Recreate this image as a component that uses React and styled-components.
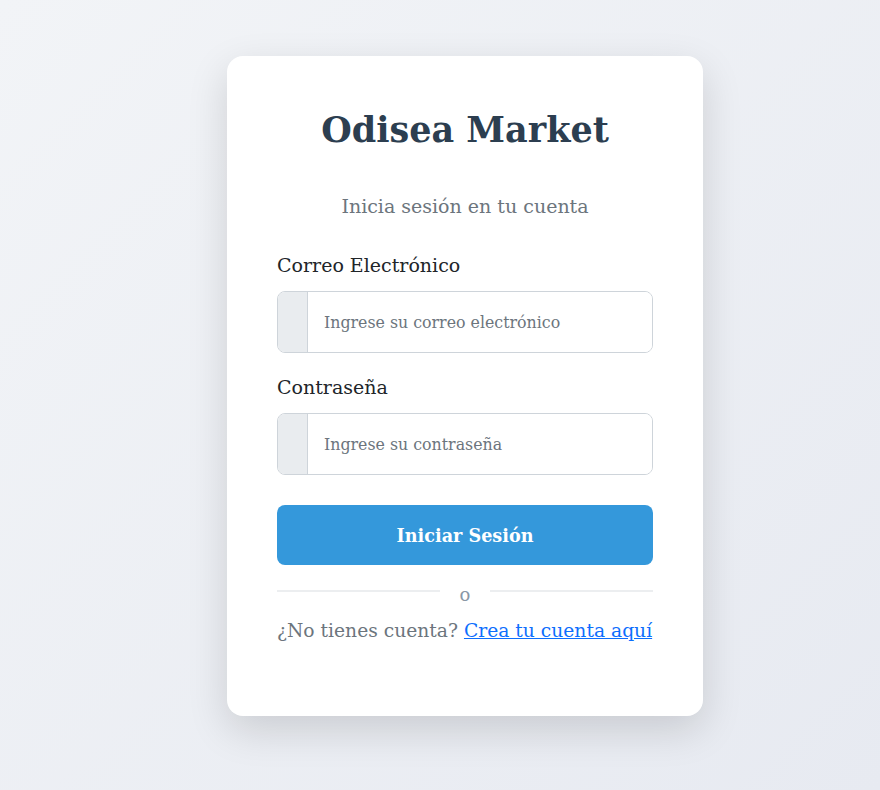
import styled, { createGlobalStyle } from "styled-components";

const GlobalStyle = createGlobalStyle`
  html, body {
    margin: 0;
    padding: 0;
  }
  body {
    min-height: 790px;
    background: linear-gradient(135deg, #f2f4f7 0%, #e7eaf1 100%);
    font-family: "DejaVu Serif", "Liberation Serif", serif;
  }
`;

const Page = styled.div`
  display: flex;
  justify-content: center;
  padding: 56px 0 0 50px;
`;

const Card = styled.div`
  box-sizing: border-box;
  width: 476px;
  height: 660px;
  padding: 46px 50px 0;
  background: #fff;
  border-radius: 16px;
  box-shadow: 0 14px 40px rgba(0, 0, 0, 0.14);
`;

const Title = styled.h1`
  margin: 0;
  text-align: center;
  font-size: 35px;
  font-weight: 700;
  color: #2c3e50;
  line-height: 56px;
`;

const Subtitle = styled.p`
  margin: 33px 0 0;
  text-align: center;
  font-size: 19px;
  color: #6c757d;
  line-height: 30px;
`;

const Field = styled.div`
  margin-top: ${(p) => p.$gap}px;
`;

const Label = styled.label`
  display: block;
  font-size: 19px;
  color: #212529;
  line-height: 28px;
  margin-bottom: 12px;
`;

const InputGroup = styled.div`
  display: flex;
  height: 62px;
  box-sizing: border-box;
  border: 1px solid #ced4da;
  border-radius: 8px;
  overflow: hidden;
`;

const Addon = styled.span`
  width: 29px;
  background: #e9ecef;
  border-right: 1px solid #ced4da;
`;

const Input = styled.input`
  flex: 1;
  border: none;
  outline: none;
  padding: 0 16px;
  font-family: inherit;
  font-size: 15.8px;
  color: #212529;
  background: #fff;
  &::placeholder {
    color: #6c757d;
  }
`;

const Button = styled.button`
  display: block;
  width: 100%;
  height: 60px;
  margin-top: 30px;
  border: none;
  border-radius: 8px;
  background: #3498db;
  color: #fff;
  font-family: inherit;
  font-size: 17.6px;
  font-weight: 700;
`;

const Divider = styled.div`
  display: flex;
  align-items: center;
  gap: 20px;
  margin-top: 19px;
  color: #8a97a6;
  font-size: 18px;
  line-height: 22px;
  &::before,
  &::after {
    content: "";
    flex: 1;
    height: 2px;
    background: #eceef0;
    margin-top: -8px;
  }
`;

const Footer = styled.p`
  margin: 10px 0 0;
  font-size: 18.7px;
  color: #6c757d;
  line-height: 30px;
  a {
    color: #0d6efd;
  }
`;

export default function App() {
  return (
    <>
      <GlobalStyle />
      <Page>
        <Card>
          <Title>Odisea Market</Title>
          <Subtitle>Inicia sesión en tu cuenta</Subtitle>
          <Field $gap={30}>
            <Label>Correo Electrónico</Label>
            <InputGroup>
              <Addon />
              <Input type="email" placeholder="Ingrese su correo electrónico" />
            </InputGroup>
          </Field>
          <Field $gap={20}>
            <Label>Contraseña</Label>
            <InputGroup>
              <Addon />
              <Input type="password" placeholder="Ingrese su contraseña" />
            </InputGroup>
          </Field>
          <Button>Iniciar Sesión</Button>
          <Divider>o</Divider>
          <Footer>
            ¿No tienes cuenta? <a href="#">Crea tu cuenta aquí</a>
          </Footer>
        </Card>
      </Page>
    </>
  );
}
